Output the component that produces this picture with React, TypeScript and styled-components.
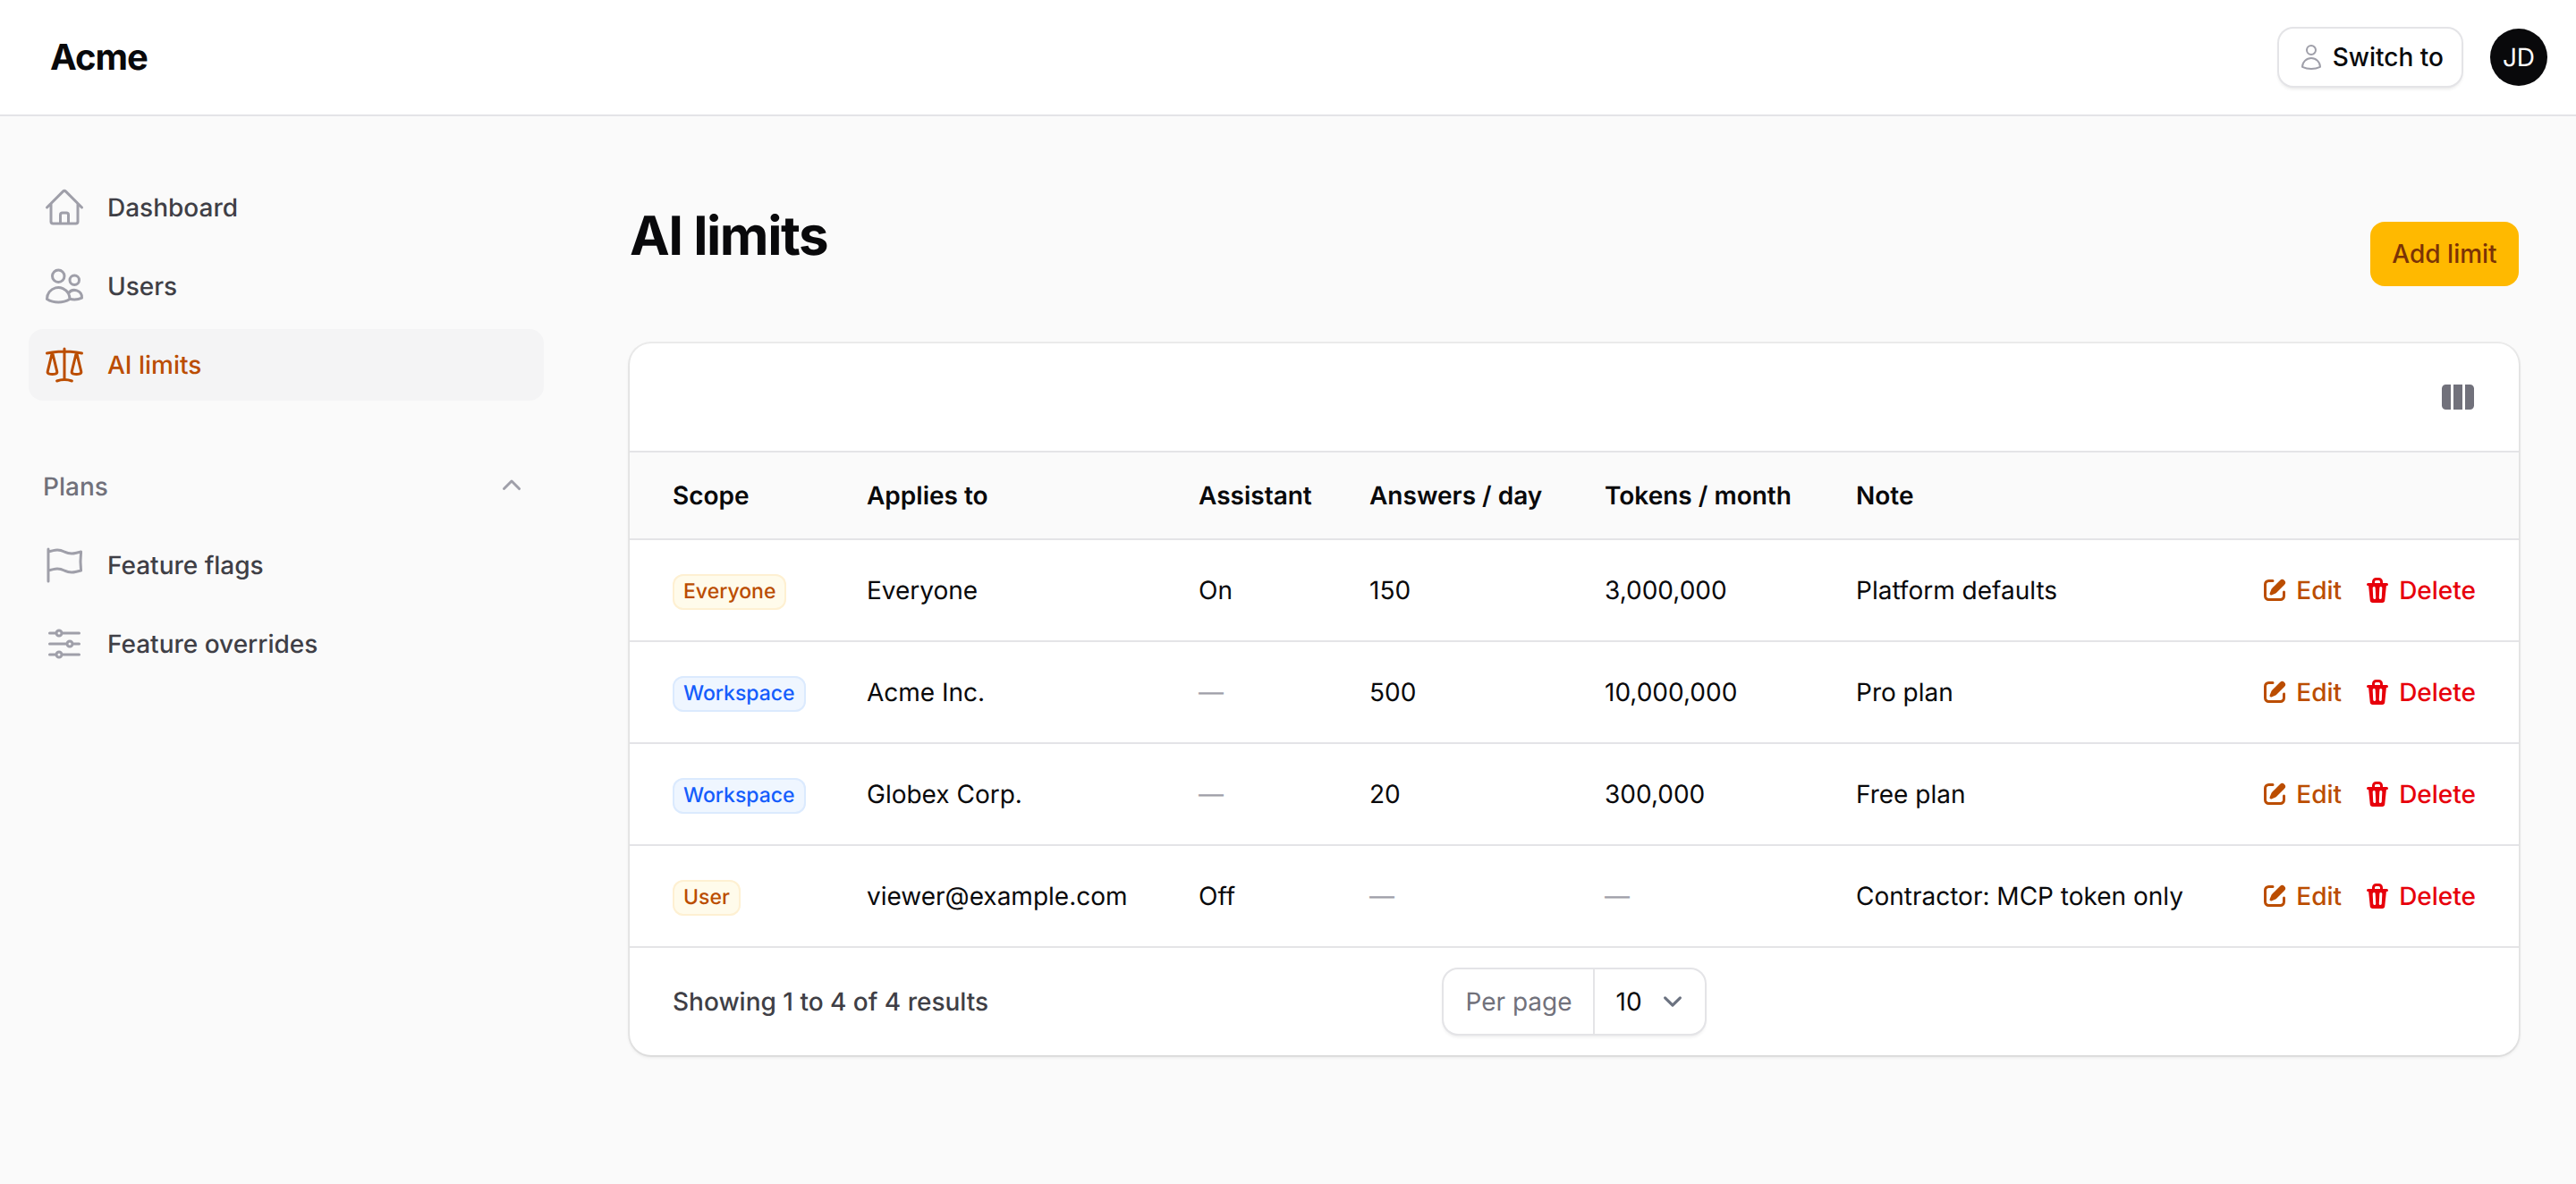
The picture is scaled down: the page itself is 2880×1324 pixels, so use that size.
import * as React from "react";
import styled, { createGlobalStyle } from "styled-components";
import {
  HiOutlineHome,
  HiOutlineUsers,
  HiOutlineScale,
  HiOutlineFlag,
  HiOutlineAdjustmentsHorizontal,
  HiOutlineUser,
  HiMiniChevronUp,
  HiMiniViewColumns,
} from "react-icons/hi2";

const GlobalStyle = createGlobalStyle`
  * {
    box-sizing: border-box;
  }

  body {
    margin: 0;
    background: #fafafa;
    color: #09090b;
    font-family: Inter, "Liberation Sans", sans-serif;
    font-size: 28px;
    line-height: 40px;
    text-rendering: geometricPrecision;
  }
`;

const Page = styled.div`
  min-height: 1324px;
`;

const TopBar = styled.header`
  height: 130px;
  padding: 0 32px 0 56px;
  display: flex;
  align-items: center;
  justify-content: space-between;
  background: #fff;
  border-bottom: 2px solid #e4e4e7;
`;

const Brand = styled.div`
  font-size: 40px;
  line-height: 56px;
  font-weight: 700;
  letter-spacing: -1px;
`;

const TopActions = styled.div`
  display: flex;
  align-items: center;
  gap: 32px;
`;

const SwitchButton = styled.button`
  height: 64px;
  padding: 0 20px;
  display: flex;
  align-items: center;
  gap: 8px;
  background: #fff;
  border: 0;
  border-radius: 16px;
  box-shadow: 0 0 0 2px #e4e4e7, 0 3px 4px rgba(0, 0, 0, 0.12);
  color: #09090b;
  font: inherit;
  font-weight: 500;

  svg {
    width: 32px;
    height: 32px;
    color: #9f9fa9;
  }
`;

const Avatar = styled.div`
  width: 64px;
  height: 64px;
  display: flex;
  align-items: center;
  justify-content: center;
  border-radius: 50%;
  background: #09090b;
  color: #fff;
`;

const Body = styled.div`
  display: flex;
`;

const Sidebar = styled.aside`
  width: 640px;
  flex: none;
  padding: 62px 32px 0;
`;

const NavList = styled.nav`
  display: flex;
  flex-direction: column;
  gap: 8px;
`;

const NavGroup = styled.div`
  margin-top: 56px;
  display: flex;
  flex-direction: column;
  gap: 8px;
`;

const GroupLabel = styled.div`
  height: 80px;
  padding: 0 16px;
  display: flex;
  align-items: center;
  justify-content: space-between;
  color: #71717b;
  font-weight: 500;

  svg {
    width: 40px;
    height: 40px;
    color: #9f9fa9;
  }
`;

const NavItem = styled.a<{ $active?: boolean }>`
  height: 80px;
  padding: 0 16px;
  display: flex;
  align-items: center;
  gap: 24px;
  border-radius: 16px;
  background: ${(p) => (p.$active ? "#f4f4f5" : "transparent")};
  color: ${(p) => (p.$active ? "#bb4d00" : "#3f3f46")};
  font-weight: 500;

  svg {
    width: 48px;
    height: 48px;
    color: ${(p) => (p.$active ? "#bb4d00" : "#9f9fa9")};
  }
`;

const Main = styled.main`
  flex: 1;
  min-width: 0;
  padding: 98px 64px 0;
`;

const PageHead = styled.div`
  height: 92px;
  margin-bottom: 64px;
  display: flex;
  justify-content: space-between;
`;

const Title = styled.h1`
  margin: 0;
  font-size: 60px;
  line-height: 72px;
  font-weight: 700;
  letter-spacing: -1.5px;
  color: #09090b;
`;

const AddButton = styled.button`
  align-self: flex-end;
  height: 72px;
  min-width: 166px;
  padding: 0 24px;
  background: #ffb900;
  border: 0;
  border-radius: 16px;
  color: #7b3306;
  font: inherit;
  font-weight: 500;
`;

const Card = styled.section`
  background: #fff;
  border-radius: 24px;
  overflow: hidden;
  box-shadow: 0 0 0 2px rgba(9, 9, 11, 0.06), 0 2px 4px rgba(0, 0, 0, 0.1);
`;

const Toolbar = styled.div`
  height: 122px;
  padding: 0 48px;
  display: flex;
  align-items: center;
  justify-content: flex-end;
  border-bottom: 2px solid #e4e4e7;

  svg {
    width: 40px;
    height: 40px;
    color: #71717b;
  }
`;

const Table = styled.table`
  width: 100%;
  table-layout: fixed;
  border-collapse: separate;
  border-spacing: 0;
`;

const Col = styled.col<{ $w: number }>`
  width: ${(p) => p.$w}px;
`;

const Th = styled.th`
  height: 98px;
  padding: 0 24px;
  background: #fafafa;
  border-bottom: 2px solid #e4e4e7;
  text-align: left;
  font-weight: 600;

  &:first-child {
    padding-left: 48px;
  }
`;

const Td = styled.td<{ $muted?: boolean }>`
  height: 114px;
  padding: 0 24px;
  border-bottom: 2px solid #e4e4e7;
  color: ${(p) => (p.$muted ? "#9f9fa9" : "#09090b")};
  white-space: nowrap;

  &:first-child {
    padding-left: 48px;
  }

  &:last-child {
    padding-right: 48px;
  }
`;

const tones = {
  amber: { bg: "#fffbeb", ring: "#fef0d2", text: "#bb4d00" },
  blue: { bg: "#eff6ff", ring: "#dbeafe", text: "#155dfc" },
};

const Badge = styled.div<{ $tone: "amber" | "blue" }>`
  width: fit-content;
  height: 40px;
  margin-top: 4px;
  padding: 0 12px;
  border-radius: 12px;
  background: ${(p) => tones[p.$tone].bg};
  box-shadow: inset 0 0 0 2px ${(p) => tones[p.$tone].ring};
  color: ${(p) => tones[p.$tone].text};
  font-size: 23px;
  line-height: 39px;
  font-weight: 500;
`;

const RowActions = styled.div`
  display: flex;
  justify-content: flex-end;
  gap: 24px;
`;

const RowAction = styled.a<{ $danger?: boolean }>`
  display: flex;
  align-items: center;
  gap: 8px;
  color: ${(p) => (p.$danger ? "#e7000b" : "#bb4d00")};
  font-weight: 500;

  svg {
    width: 32px;
    height: 32px;
    fill: currentColor;
  }
`;

const Footer = styled.div`
  height: 120px;
  padding: 24px 48px;
  display: grid;
  grid-template-columns: 1fr auto 1fr;
  align-items: center;
`;

const Summary = styled.div`
  color: #3f3f46;
  font-weight: 500;
`;

const PerPage = styled.div`
  height: 72px;
  display: flex;
  align-items: stretch;
  border-radius: 16px;
  box-shadow: 0 0 0 2px #e4e4e7, 0 3px 4px rgba(0, 0, 0, 0.1);
`;

const PerPageLabel = styled.div`
  padding: 0 23px 0 24px;
  display: flex;
  align-items: center;
  border-right: 2px solid #e4e4e7;
  color: #71717b;
`;

const PerPageValue = styled.div`
  width: 123px;
  padding-left: 24px;
  display: flex;
  align-items: center;
  justify-content: space-between;

  svg {
    width: 42px;
    height: 42px;
    margin-right: 15px;
  }
`;

const PencilIcon = () => (
  <svg viewBox="0 0 16 16">
    <path d="M13.488 2.513a1.75 1.75 0 0 0-2.475 0L6.75 6.774a2.75 2.75 0 0 0-.596.892l-.848 2.047a.75.75 0 0 0 .98.98l2.047-.848a2.75 2.75 0 0 0 .892-.596l4.262-4.263a1.75 1.75 0 0 0 0-2.474Z" />
    <path d="M4.75 3.5c-.69 0-1.25.56-1.25 1.25v6.5c0 .69.56 1.25 1.25 1.25h6.5c.69 0 1.25-.56 1.25-1.25V9A.75.75 0 0 1 14 9v2.25A2.75 2.75 0 0 1 11.25 14h-6.5A2.75 2.75 0 0 1 2 11.25v-6.5A2.75 2.75 0 0 1 4.75 2H7a.75.75 0 0 1 0 1.5H4.75Z" />
  </svg>
);

const TrashIcon = () => (
  <svg viewBox="0 0 16 16">
    <path
      fillRule="evenodd"
      clipRule="evenodd"
      d="M5 3.25V4H2.75a.75.75 0 0 0 0 1.5h.3l.815 8.15A1.5 1.5 0 0 0 5.357 15h5.285a1.5 1.5 0 0 0 1.493-1.35l.815-8.15h.3a.75.75 0 0 0 0-1.5H11v-.75A2.25 2.25 0 0 0 8.75 1h-1.5A2.25 2.25 0 0 0 5 3.25Zm2.25-.75a.75.75 0 0 0-.75.75V4h3v-.75a.75.75 0 0 0-.75-.75h-1.5ZM6.05 6a.75.75 0 0 1 .787.713l.275 5.5a.75.75 0 0 1-1.498.075l-.275-5.5A.75.75 0 0 1 6.05 6Zm3.9 0a.75.75 0 0 1 .712.787l-.275 5.5a.75.75 0 0 1-1.498-.075l.275-5.5a.75.75 0 0 1 .786-.711Z"
    />
  </svg>
);

const limits = [
  { scope: "Everyone", tone: "amber", target: "Everyone", assistant: "On", answers: "150", tokens: "3,000,000", note: "Platform defaults" },
  { scope: "Workspace", tone: "blue", target: "Acme Inc.", assistant: "—", answers: "500", tokens: "10,000,000", note: "Pro plan" },
  { scope: "Workspace", tone: "blue", target: "Globex Corp.", assistant: "—", answers: "20", tokens: "300,000", note: "Free plan" },
  { scope: "User", tone: "amber", target: "viewer@example.com", assistant: "Off", answers: "—", tokens: "—", note: "Contractor: MCP token only" },
] as const;

const columnWidths = [241, 371, 191, 263, 281, 449, 316];

export default function App() {
  return (
    <Page>
      <GlobalStyle />
      <TopBar>
        <Brand>Acme</Brand>
        <TopActions>
          <SwitchButton>
            <HiOutlineUser />
            Switch to
          </SwitchButton>
          <Avatar>JD</Avatar>
        </TopActions>
      </TopBar>
      <Body>
        <Sidebar>
          <NavList>
            <NavItem>
              <HiOutlineHome />
              Dashboard
            </NavItem>
            <NavItem>
              <HiOutlineUsers />
              Users
            </NavItem>
            <NavItem $active>
              <HiOutlineScale />
              AI limits
            </NavItem>
          </NavList>
          <NavGroup>
            <GroupLabel>
              Plans
              <HiMiniChevronUp />
            </GroupLabel>
            <NavItem>
              <HiOutlineFlag />
              Feature flags
            </NavItem>
            <NavItem>
              <HiOutlineAdjustmentsHorizontal />
              Feature overrides
            </NavItem>
          </NavGroup>
        </Sidebar>
        <Main>
          <PageHead>
            <Title>AI limits</Title>
            <AddButton>Add limit</AddButton>
          </PageHead>
          <Card>
            <Toolbar>
              <HiMiniViewColumns />
            </Toolbar>
            <Table>
              <colgroup>
                {columnWidths.map((w, i) => (
                  <Col key={i} $w={w} />
                ))}
              </colgroup>
              <thead>
                <tr>
                  <Th>Scope</Th>
                  <Th>Applies to</Th>
                  <Th>Assistant</Th>
                  <Th>Answers / day</Th>
                  <Th>Tokens / month</Th>
                  <Th>Note</Th>
                  <Th />
                </tr>
              </thead>
              <tbody>
                {limits.map((row, i) => (
                  <tr key={i}>
                    <Td>
                      <Badge $tone={row.tone}>{row.scope}</Badge>
                    </Td>
                    <Td>{row.target}</Td>
                    <Td $muted={row.assistant === "—"}>{row.assistant}</Td>
                    <Td $muted={row.answers === "—"}>{row.answers}</Td>
                    <Td $muted={row.tokens === "—"}>{row.tokens}</Td>
                    <Td>{row.note}</Td>
                    <Td>
                      <RowActions>
                        <RowAction>
                          <PencilIcon />
                          Edit
                        </RowAction>
                        <RowAction $danger>
                          <TrashIcon />
                          Delete
                        </RowAction>
                      </RowActions>
                    </Td>
                  </tr>
                ))}
              </tbody>
            </Table>
            <Footer>
              <Summary>Showing 1 to 4 of 4 results</Summary>
              <PerPage>
                <PerPageLabel>Per page</PerPageLabel>
                <PerPageValue>
                  10
                  <svg viewBox="0 0 20 20" fill="none">
                    <path d="M6 8l4 4 4-4" stroke="#6b7280" strokeWidth="1.5" strokeLinecap="round" strokeLinejoin="round" />
                  </svg>
                </PerPageValue>
              </PerPage>
              <div />
            </Footer>
          </Card>
        </Main>
      </Body>
    </Page>
  );
}
